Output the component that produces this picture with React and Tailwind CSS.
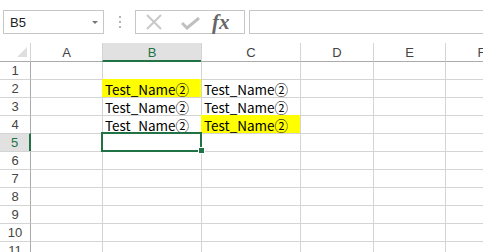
import React from "react";

const GRID = "border-[#d4d4d4]";
const cols = [
  { key: "A", w: "w-[71px]", first: true },
  { key: "B", w: "w-[99px]" },
  { key: "C", w: "w-[99px]" },
  { key: "D", w: "w-[73px]" },
  { key: "E", w: "w-[72px]" },
  { key: "F", w: "w-[72px]" },
];

const data = {
  2: { B: { t: "Test_Name②", y: true }, C: { t: "Test_Name②" } },
  3: { B: { t: "Test_Name②" }, C: { t: "Test_Name②" } },
  4: { B: { t: "Test_Name②" }, C: { t: "Test_Name②", y: true } },
};

function Toolbar() {
  return (
    <div className="flex h-[43px] items-start pt-[10px] bg-white">
      <div className="ml-[3px] flex h-[24px] w-[101px] shrink-0 items-center justify-between border border-[#c6c6c6] pl-[6px] pr-[5px]">
        <span className="text-[13px] text-[#222] leading-none" style={{ fontFamily: '"Liberation Sans", Arial, sans-serif' }}>B5</span>
        <svg width="6" height="3" viewBox="0 0 6 3"><polygon points="0,0 6,0 3,3" fill="#777" /></svg>
      </div>
      <div className="flex h-[24px] w-[31px] shrink-0 flex-col items-center justify-center gap-[3px]">
        <div className="h-[2px] w-[2px] bg-[#b4b4b4]" />
        <div className="h-[2px] w-[2px] bg-[#b4b4b4]" />
        <div className="h-[2px] w-[2px] bg-[#b4b4b4]" />
      </div>
      <div className="flex h-[24px] w-[110px] shrink-0 items-center border border-[#c6c6c6]">
        <svg className="ml-[10px]" width="16" height="16" viewBox="0 0 16 16">
          <path d="M1 1 L15 15 M15 1 L1 15" stroke="#c8c8c8" strokeWidth="2" fill="none" />
        </svg>
        <svg className="ml-[19px] mt-[3px]" width="19" height="13" viewBox="0 0 19 13">
          <path d="M1 6 L6 11 L18 1" stroke="#c0c0c0" strokeWidth="3" fill="none" />
        </svg>
        <span className="ml-[12px] text-[21px] italic font-bold text-[#666] leading-none" style={{ fontFamily: '"Liberation Serif", "Times New Roman", serif' }}>fx</span>
      </div>
      <div className="ml-[4px] h-[24px] flex-1 border-y border-l border-[#c6c6c6]" />
    </div>
  );
}

function HeaderRow() {
  return (
    <div className="flex h-[19px]" style={{ fontFamily: '"Liberation Sans", Arial, sans-serif' }}>
      <div className="relative h-[19px] w-[31px] shrink-0 border-b border-r border-b-[#ababab] border-r-[#d4d4d4]">
        <svg className="absolute left-[17px] top-[4px]" width="10" height="10" viewBox="0 0 10 10">
          <polygon points="10,0 10,10 0,10" fill="#dfdfdf" />
        </svg>
      </div>
      {cols.map((c) => {
        const sel = c.key === "B";
        return (
          <div
            key={c.key}
            className={`flex h-[19px] shrink-0 items-center justify-center text-[13px] leading-none ${c.w} ${c.first ? "" : "border-l border-l-[#d4d4d4]"} ${sel ? "bg-[#e1e1e1] border-b-2 border-b-[#217346] text-[#217346] pt-[1px]" : "border-b border-b-[#ababab] text-[#444]"}`}
          >
            {c.key}
          </div>
        );
      })}
      <div className="h-[19px] flex-1 border-b border-b-[#ababab]" />
    </div>
  );
}

function Row({ n }) {
  const sel = n === 5;
  const topB = n > 1;
  const h = n > 1 ? "h-[18px]" : "h-[17px]";
  const row = data[n] || {};
  return (
    <div className={`flex ${h}`}>
      <div
        className={`flex ${h} w-[31px] shrink-0 items-center justify-center text-[13px] leading-none ${topB ? `border-t ${GRID}` : ""} ${sel ? "bg-[#e1e1e1] border-r-2 border-r-[#217346] text-[#217346]" : "border-r border-r-[#ababab] text-[#444]"}`}
        style={{ fontFamily: '"Liberation Sans", Arial, sans-serif' }}
      >
        {n}
      </div>
      {cols.map((c) => {
        const cell = row[c.key];
        const y = cell && cell.y;
        const isSel = sel && c.key === "B";
        return (
          <div
            key={c.key}
            className={`relative flex ${h} shrink-0 items-end pl-[2px] ${c.w} ${c.first ? "" : "border-l"} ${topB ? "border-t" : ""} ${y ? "bg-[#ffff00] border-[#ffff00]" : GRID}`}
          >
            {cell && (
              <span className="text-[13.5px] leading-[16px] text-black whitespace-nowrap" style={{ fontFamily: '"Noto Sans CJK JP", sans-serif' }}>
                {cell.t}
              </span>
            )}
            {isSel && (
              <div className="absolute left-[-2px] top-[-2px] z-10 h-[20px] w-[101px] border-2 border-[#217346]">
                <div className="absolute left-[95px] top-[13px] h-[7px] w-[7px] border border-white bg-[#217346]" />
              </div>
            )}
          </div>
        );
      })}
      <div className={`${h} flex-1 border-l ${topB ? "border-t" : ""} ${GRID}`} />
    </div>
  );
}

export default function App() {
  return (
    <div className="h-[252px] w-[483px] overflow-hidden bg-white">
      <Toolbar />
      <HeaderRow />
      {Array.from({ length: 11 }, (_, i) => (
        <Row key={i + 1} n={i + 1} />
      ))}
    </div>
  );
}
